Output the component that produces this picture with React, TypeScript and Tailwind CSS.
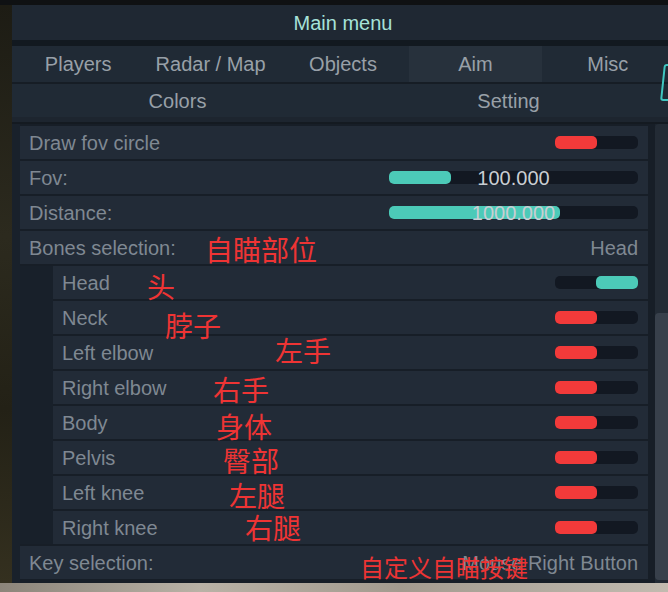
import React from "react";

const tabsTop = ["Players", "Radar / Map", "Objects", "Aim", "Misc"];
const tabsBottom = ["Colors", "Setting"];

const bones = [
  { name: "Head", on: true },
  { name: "Neck", on: false },
  { name: "Left elbow", on: false },
  { name: "Right elbow", on: false },
  { name: "Body", on: false },
  { name: "Pelvis", on: false },
  { name: "Left knee", on: false },
  { name: "Right knee", on: false },
];

// red notes written over the screenshot
const notes = [
  { text: "自瞄部位", cls: "left-[205px] top-[235px] text-[28px]" },
  { text: "头", cls: "left-[147px] top-[272px] text-[28px]" },
  { text: "脖子", cls: "left-[165px] top-[311px] text-[28px]" },
  { text: "左手", cls: "left-[275px] top-[336px] text-[28px]" },
  { text: "右手", cls: "left-[213px] top-[375px] text-[28px]" },
  { text: "身体", cls: "left-[216px] top-[412px] text-[28px]" },
  { text: "臀部", cls: "left-[223px] top-[446px] text-[28px]" },
  { text: "左腿", cls: "left-[229px] top-[481px] text-[28px]" },
  { text: "右腿", cls: "left-[245px] top-[513px] text-[28px]" },
  { text: "自定义自瞄按键", cls: "left-[360px] top-[555px] text-[24px]" },
];

function Toggle({ on }: { on: boolean }) {
  return (
    <div className={`flex h-[13px] w-[83px] rounded-[5px] bg-[#121822] ${on ? "justify-end" : "justify-start"}`}>
      <div className={`h-full w-[42px] rounded-[5px] ${on ? "bg-[#4ccab8]" : "bg-[#f23a3a]"}`} />
    </div>
  );
}

function Slider({ fill, value }: { fill: number; value: string }) {
  return (
    <div className="relative h-[13px] w-[249px] rounded-[5px] bg-[#121822]">
      <div className="absolute left-0 top-0 h-full rounded-[5px] bg-[#4ccab8]" style={{ width: fill }} />
      <div className="absolute inset-0 flex items-center justify-center text-[20px] leading-none text-[#c9ced3]">
        {value}
      </div>
    </div>
  );
}

function Row({ label, children }: { label: string; children?: React.ReactNode }) {
  return (
    <div className="flex h-[33px] shrink-0 items-center justify-between bg-[#222b37] pl-[9px] pr-[10px]">
      <span className="text-[20px] leading-none text-[#7f8892]">{label}</span>
      {children}
    </div>
  );
}

export default function App() {
  return (
    <div
      className="relative flex h-[592px] w-[668px] flex-col overflow-hidden bg-[#0f1113]"
      style={{ fontFamily: '"Liberation Sans", Arial, sans-serif' }}
    >
      <div className="h-[5px] shrink-0" />
      <div className="flex h-[578px] shrink-0">
        <div className="w-3 shrink-0 bg-[linear-gradient(180deg,#1d1c14,#2c2a1e_40%,#232116_70%,#34301f)]" />
        <div className="flex w-[662px] shrink-0 flex-col bg-[#1c242e]">
          {/* title */}
          <div className="flex h-[35px] shrink-0 items-center justify-center bg-[#1f2833] text-[20px] text-[#a6e2d9]">
            Main menu
          </div>
          <div className="h-[6px] shrink-0 bg-[#121920]" />

          {/* tabs */}
          <div className="grid h-[36px] shrink-0 grid-cols-5 bg-[#202a35]">
            {tabsTop.map((t) => (
              <div
                key={t}
                className={`flex items-center justify-center text-[20px] text-[#98a0a8] ${t === "Aim" ? "bg-[#27313c]" : ""}`}
              >
                {t}
              </div>
            ))}
          </div>
          <div className="h-[2px] shrink-0 bg-[#161d25]" />
          <div className="grid h-[33px] shrink-0 grid-cols-2 bg-[#202a35]">
            {tabsBottom.map((t) => (
              <div key={t} className="flex items-center justify-center text-[20px] text-[#98a0a8]">
                {t}
              </div>
            ))}
          </div>
          <div className="h-[7px] shrink-0 border-b-2 border-[#141a21] bg-[#1d252f]" />

          {/* content */}
          <div className="flex min-h-0 flex-1">
            <div className="w-2 shrink-0 bg-[#19212b]" />
            <div className="flex w-[628px] shrink-0 flex-col gap-[2px] bg-[#171e27] pt-[2px]">
              <Row label="Draw fov circle">
                <Toggle on={false} />
              </Row>
              <Row label="Fov:">
                <Slider fill={62} value="100.000" />
              </Row>
              <Row label="Distance:">
                <Slider fill={171} value="1000.000" />
              </Row>
              <Row label="Bones selection:">
                <span className="text-[20px] leading-none text-[#7f8892]">Head</span>
              </Row>
              <div className="flex shrink-0">
                <div className="w-[33px] shrink-0 bg-[#18202a]" />
                <div className="flex flex-1 flex-col gap-[2px]">
                  {bones.map((b) => (
                    <Row key={b.name} label={b.name}>
                      <Toggle on={b.on} />
                    </Row>
                  ))}
                </div>
              </div>
              <Row label="Key selection:">
                <span className="text-[20px] leading-none text-[#7f8892]">Mouse Right Button</span>
              </Row>
            </div>
            <div className="w-[7px] shrink-0 bg-[#171e27]" />
            <div className="flex flex-1 flex-col rounded-t-[4px] bg-[#232b35] pt-[189px] pb-[3px]">
              <div className="flex-1 rounded-[4px] bg-[#38404b]" />
            </div>
          </div>
        </div>
      </div>
      <div className="flex-1 bg-[linear-gradient(90deg,#8c857a,#b9b2a6_30%,#a39b8f_60%,#c2bbb0)]" />

      {/* bracket of a window behind, peeking at the right edge */}
      <div className="absolute left-[662px] top-[64px] h-[37px] w-[12px] -skew-x-6 rounded-[3px] border-2 border-[#3fc6c0]" />

      {notes.map((n) => (
        <span
          key={n.text}
          className={`absolute whitespace-nowrap leading-none text-[#ee3434] ${n.cls}`}
          style={{ fontFamily: '"Noto Sans CJK SC", sans-serif' }}
        >
          {n.text}
        </span>
      ))}
    </div>
  );
}
